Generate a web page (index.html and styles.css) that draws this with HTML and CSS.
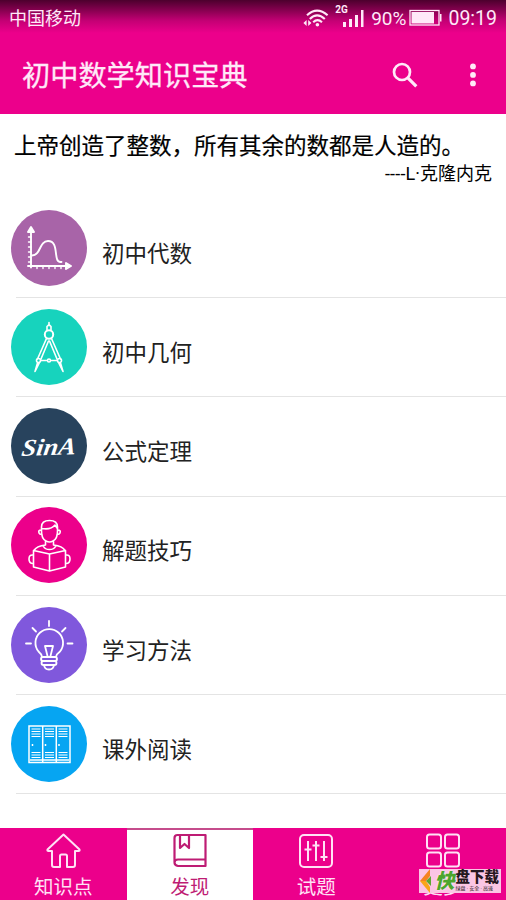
FILE: index.html
```
<!DOCTYPE html>
<html lang="zh-CN">
<head>
<meta charset="utf-8">
<title>初中数学知识宝典</title>
<link rel="stylesheet" href="styles.css">
</head>
<body>
<div class="app">
  <header class="header">
    <div class="status">
      <span class="carrier">中国移动</span>
      <div class="indicators">
        <svg class="wifi" width="27" height="20" viewBox="0 0 27 20" fill="none" stroke="currentColor">
          <path d="M4 7.2Q14 -2 24.6 7.2M6.8 11Q14 3.8 21.8 11M10.2 14.2Q14.5 10.2 19 14.2" stroke-width="2.1"/>
          <circle cx="14.4" cy="16.7" r="1.8" fill="currentColor" stroke="none"/>
          <path d="M3.6 12.1v6L.4 15.1zM5.2 12.1v6l3.2-3z" fill="currentColor" stroke="none"/>
        </svg>
        <div class="cell">
          <span class="net">2G</span>
          <svg width="22" height="19" viewBox="0 0 22 19" fill="currentColor"><path d="M1 13h3v5H1zM7 10h3v8H7zM13 6h3v12h-3zM19 1h2.5v17H19z"/></svg>
        </div>
        <span class="percent">90%</span>
        <svg class="battery" width="33" height="18" viewBox="0 0 33 18"><rect x="1" y="1.5" width="29" height="14.5" fill="none" stroke="currentColor" stroke-width="1.3"/><path d="M2.500 3h22.500v11.500H2.500zM31 5h1.500v7.500H31z" fill="currentColor"/></svg>
        <span class="clock">09:19</span>
      </div>
    </div>
    <div class="titlebar">
      <h1>初中数学知识宝典</h1>
      <svg class="search" width="26" height="26" viewBox="0 0 26 26" fill="none" stroke="currentColor"><circle cx="10" cy="10" r="8" stroke-width="2.7"/><path d="M15.8 15.8L24.3 24.3" stroke-width="3.2"/></svg>
      <svg class="more" width="8" height="24" viewBox="0 0 8 24" fill="currentColor"><circle cx="4" cy="3.4" r="2.9"/><circle cx="4" cy="11.9" r="2.9"/><circle cx="4" cy="20.4" r="2.9"/></svg>
    </div>
  </header>

  <section class="quote">
    <p class="saying">上帝创造了整数，所有其余的数都是人造的。</p>
    <p class="author"><span class="dash">----</span>L·克隆内克</p>
  </section>

  <main class="list">
    <div class="row">
      <svg class="icon algebra" viewBox="0 0 76 76" fill="none" stroke="currentColor" stroke-width="1.9" stroke-linecap="round" stroke-linejoin="round">
        <path d="M20 18v39.500M17 56h42M17 22l3-5 3 5zM55 53l5 3-5 3z"/>
        <path d="M17.500 27H20M17.500 32H20M17.500 37H20M17.500 42H20M17.500 47H20M17.500 52H20M26 56v2.500M32 56v2.500M38 56v2.500M44 56v2.500M50 56v2.500" stroke-width="1.400"/>
        <path d="M21 45.500c9 0 7-14.500 16-14.500s7 12 9 18q1 3.500 4.500 3"/>
      </svg>
      <span class="label">初中代数</span>
    </div>
    <div class="row">
      <svg class="icon geometry" viewBox="0 0 76 76" fill="none" stroke="currentColor" stroke-width="1.6" stroke-linecap="round" stroke-linejoin="round">
        <path d="M38 13.500v3M36 21v-3.500l2-2 2 2V21"/>
        <circle cx="38" cy="25.500" r="4.200" stroke-width="2"/>
        <path d="M35.500 29.500L26.500 50M40.500 29.500L49.500 50M37.500 32L30 50M38.500 32L46 50"/>
        <circle cx="27.500" cy="51.500" r="2"/><circle cx="48.500" cy="51.500" r="2"/><circle cx="38" cy="51.500" r="1.500"/>
        <path d="M30 51.500h6M40 51.500h6M26.500 54l-2.500 8.500 4.500-9M49.500 54l2.500 8.500-4.500-9"/>
      </svg>
      <span class="label">初中几何</span>
    </div>
    <div class="row">
      <svg class="icon formula" viewBox="0 0 76 76"><text class="sina" x="10" y="47" textLength="54" lengthAdjust="spacingAndGlyphs" transform="translate(8 0) skewX(-10) rotate(-2 38 38)">SinA</text></svg>
      <span class="label">公式定理</span>
    </div>
    <div class="row">
      <svg class="icon skills" viewBox="0 0 76 76" fill="none" stroke="currentColor" stroke-width="1.6" stroke-linecap="round" stroke-linejoin="round">
        <path d="M30.500 24v-4q0-6.500 8-6.500t8 6.500v4q0 8-4.500 10-3.500 2-7 0-4.500-2-4.500-10zM31 21.500q9 1.500 13-3.500l2 3M30 23q-3 0-2 3 .5 1.500 3 1.500M47 23q3 0 2 3-.5 1.500-3 1.500"/>
        <path d="M34.500 34.500v3.500q-9 1-11.500 5.500M42.500 34.500v3.500q9 1 11.500 5.500M32.500 39.500q1.500 3 6 3t6-3"/>
        <path d="M22.500 43.500L38.500 47l16-3.500V60l-16 4-16-4zM38.500 47v17"/>
        <path d="M22 48q-4-.5-4 4t4 4.500M55 48q4-.5 4 4t-4 4.500"/>
      </svg>
      <span class="label">解题技巧</span>
    </div>
    <div class="row">
      <svg class="icon study" viewBox="0 0 76 76" fill="none" stroke="currentColor" stroke-width="1.8" stroke-linecap="round" stroke-linejoin="round">
        <path d="M38 14v5M21.500 21l3.500 3.500M54.500 21L51 24.500M15 36.500h5M56.500 36.500h5"/>
        <path d="M31 50q-.5-3-3.500-5.500a13.800 13.800 0 1 1 21.500 0Q45.500 47 45 50M34 39h8l-2.500 10M34 39l2.500 10"/>
        <rect x="30" y="50" width="16" height="4" rx="2"/><rect x="30.500" y="54" width="15" height="4" rx="2"/><path d="M33 58q.5 4.500 5 4.500t5-4.500"/>
      </svg>
      <span class="label">学习方法</span>
    </div>
    <div class="row">
      <svg class="icon reading" viewBox="0 0 76 76" fill="none" stroke="currentColor" stroke-width="1.5">
        <path d="M18 20h41v36.500H18zM31.700 20v36.500M45.300 20v36.500M19 54h39"/>
        <path d="M20.500 23h9M20.500 25.500h9M20.500 28h9M20.500 30.500h9M34 23h9M34 25.500h9M34 28h9M34 30.500h9M47.500 23h9M47.500 25.500h9M47.500 28h9M47.500 30.500h9M20.500 46.500h9M20.500 49h9M20.500 51.500h9M34 46.500h9M34 49h9M34 51.500h9M47.500 46.500h9M47.500 49h9M47.500 51.500h9" stroke-width="1.100"/>
        <path d="M21.500 38v2M34.500 38v2M48 38v2"/>
      </svg>
      <span class="label">课外阅读</span>
    </div>
  </main>

  <nav class="tabs">
    <div class="tab">
      <svg width="36" height="36" viewBox="0 0 36 36" fill="none" stroke="currentColor" stroke-width="2" stroke-linejoin="round"><path d="M18.500 1.500L2.500 16.500q-.5 1.500 1 1.500H7v14q0 2 2 2h6V23q0-1.500 1.500-1.500h4Q22 21.500 22 23v11h6q2 0 2-2V18h3.500q1.500 0 1-1.500z"/></svg>
      <span>知识点</span>
    </div>
    <div class="tab active">
      <svg width="36" height="36" viewBox="0 0 36 36" fill="none" stroke="currentColor" stroke-width="2.200" stroke-linejoin="round"><path d="M2.500 29V5q0-3 3-3h28v24.500H6q-3.500 0-3.500 3T6 33h27.500v-6.500M8 2v13l4.500-4 4.500 4V2"/></svg>
      <span>发现</span>
    </div>
    <div class="tab">
      <svg width="36" height="36" viewBox="0 0 36 36" fill="none" stroke="currentColor" stroke-width="2"><rect x="2" y="2" width="32" height="32" rx="4"/><path d="M10 8v20M18 8v20M26 8v20M6.500 16.500h7M14.500 12.500h7M22.500 24h7"/></svg>
      <span>试题</span>
    </div>
    <div class="tab">
      <svg width="36" height="36" viewBox="0 0 36 36" fill="none" stroke="currentColor" stroke-width="2"><rect x="2" y="1.500" width="14" height="14" rx="2.500"/><rect x="20" y="1.500" width="14" height="14" rx="2.500"/><rect x="2" y="19.500" width="14" height="14" rx="2.500"/><rect x="20" y="19.500" width="14" height="14" rx="2.500"/></svg>
      <span>更多</span>
      <div class="badge">
        <svg width="16" height="24" viewBox="0 0 16 24"><path d="M1 12L11 0v7l-4 5z" fill="#f58220"/><path d="M1 12h6l4 6v6z" fill="#f9a51a"/><path d="M7 12l5-5v10z" fill="#5da832"/></svg>
        <span class="fast">快</span>
        <div class="brand"><b>盘下载</b><small>绿盘 · 安全 · 高速</small></div>
      </div>
    </div>
  </nav>
</div>
</body>
</html>
```
FILE: styles.css
```
* { box-sizing: border-box; }
body {
  margin: 0;
  background: #fff;
  font-family: Roboto, "Noto Sans CJK SC", sans-serif;
}
h1, p { margin: 0; font-weight: 400; }
svg { display: block; flex: none; }
.app { width: 506px; height: 900px; display: flex; flex-direction: column; overflow: hidden; }

.header {
  height: 114px;
  flex: none;
  color: #ffe9f8;
  background: linear-gradient(#4c002d 0, #85004f 10px, #c50075 21px, #ec008b 33px);
}
.status { height: 36px; display: flex; justify-content: space-between; padding: 0 9px; }
.carrier { font-size: 18px; line-height: 38px; }
.indicators { display: flex; align-items: center; }
.wifi { margin: 0 6px 0 0; }
.cell { display: flex; position: relative; padding-left: 6px; margin-right: 7px; }
.net { position: absolute; left: -1px; top: -5px; font-size: 10px; line-height: 12px; font-weight: 700; }
.percent { font-size: 19px; line-height: 36px; margin-right: 3px; padding-top: 1px; }
.battery { margin-right: 6px; }
.clock { font-size: 19.5px; line-height: 36px; padding-top: 2px; }
.titlebar { height: 78px; display: flex; align-items: center; padding: 0 29px 0 22px; }
.titlebar h1 { flex: 1; font-size: 28.2px; line-height: 74px; padding-top: 4px; -webkit-text-stroke: 0.3px currentColor; }
.search { margin-right: 51px; }

.quote { height: 84px; flex: none; padding: 15px 14px 0; color: #000; }
.saying { font-size: 22.5px; line-height: 34px; white-space: nowrap; -webkit-text-stroke: 0.2px currentColor; }
.author { font-size: 18px; line-height: 22px; text-align: right; }
.dash { letter-spacing: 0.2px; }

.list { height: 630px; flex: none; padding: 1px 0 0 11px; }
.row { height: 99.2px; display: flex; align-items: center; gap: 15px; padding-bottom: 1.5px; background: linear-gradient(#e4e4e4, #e4e4e4) 5px bottom / 100% 1px no-repeat; }
.icon { width: 76px; height: 76px; border-radius: 50%; color: #fff; }
.algebra { background: #a864a8; }
.geometry { background: #17d3bd; }
.formula { background: #28435d; }
.skills { background: #ec008b; }
.study { background: #8058dc; }
.reading { background: #06a5f2; }
.sina { font: italic 700 24px "Liberation Serif", serif; fill: #fff; }
.label { font-size: 22.5px; line-height: 30px; padding-top: 12px; color: #222; }

.tabs { height: 72px; flex: none; display: grid; grid-template-columns: repeat(4, 1fr); background: #ec008b; color: #ffe1f5; }
.tab { position: relative; display: flex; flex-direction: column; align-items: center; padding-top: 5px; }
.tab span { font-size: 19.5px; line-height: 26px; margin-top: 6px; }
.active { background: #fff; color: #be1c74; border-top: 2px solid #c54c8c; padding-top: 3px; }
.badge { position: absolute; left: 39px; top: 41px; width: 82px; height: 24px; display: flex; align-items: center; background: #fbc5e4; }
.tab .fast { margin: 0 1px 0 0; font-size: 20px; line-height: 24px; font-weight: 900; font-style: italic; color: #4da52d; text-shadow: 0 0 2px #fff; }
.brand { display: flex; flex-direction: column; color: #261720; }
.brand b { font-size: 14.5px; line-height: 15px; font-weight: 900; }
.brand small { font-size: 5px; line-height: 7px; white-space: nowrap; }
```
